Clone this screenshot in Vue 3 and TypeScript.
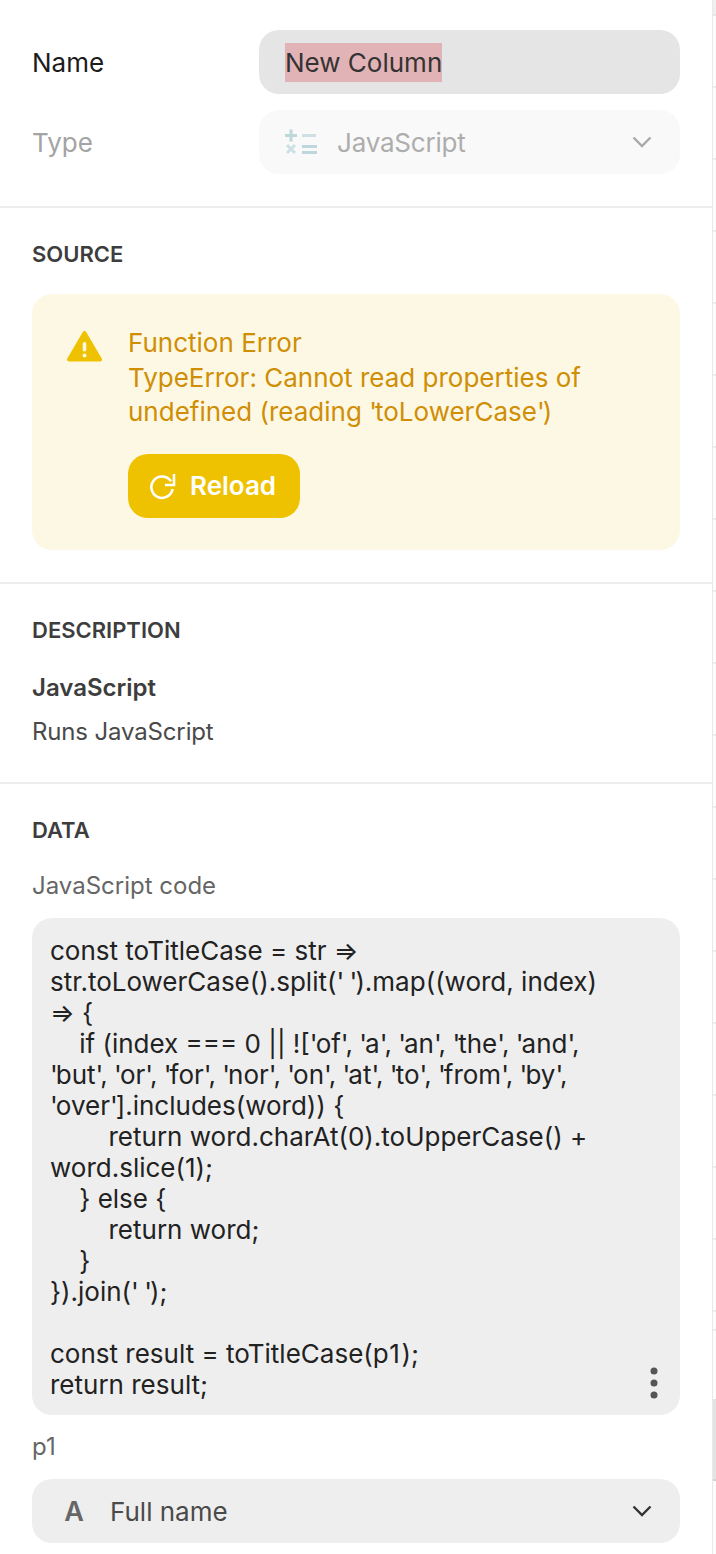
<script setup lang="ts">
interface Token { text: string; kind: string }

const code = `const toTitleCase = str => str.toLowerCase().split(' ').map((word, index) => {
    if (index === 0 || !['of', 'a', 'an', 'the', 'and', 'but', 'or', 'for', 'nor', 'on', 'at', 'to', 'from', 'by', 'over'].includes(word)) {
        return word.charAt(0).toUpperCase() + word.slice(1);
    } else {
        return word;
    }
}).join(' ');

const result = toTitleCase(p1);
return result;`

function tokenize(source: string): Token[] {
  return source
    .split(/(',|'|p1)/)
    .filter((text) => text.length > 0)
    .map((text) => ({
      text,
      kind: text === "'," ? 'quote-comma' : text === "'" ? 'quote' : text === 'p1' ? 'one' : 'plain',
    }))
}

const codeTokens = tokenize(code)
const errorTokens = tokenize("TypeError: Cannot read properties of undefined (reading 'toLowerCase')")
const stripCells = Array.from({ length: 18 }, (_, i) => i)
</script>

<template>
  <div class="page">
    <main class="panel">
      <section class="top">
        <div class="row">
          <label class="row-label">Name</label>
          <div class="input"><span class="selected">New Column</span></div>
        </div>
        <div class="row disabled">
          <label class="row-label">Type</label>
          <div class="select">
            <svg class="type-icon" width="32" height="28" viewBox="0 0 32 28">
              <path d="M0 7.500h12M6 1.500v12" stroke="#6fa9b6" stroke-width="3" fill="none" />
              <path d="M17 7.500h14" stroke="#8fc0ca" stroke-width="3" fill="none" />
              <path d="M2 17l8 8M10 17l-8 8" stroke="#8fc0ca" stroke-width="3" fill="none" />
              <path d="M17 18.500h15M17 24.500h15" stroke="#6fa9b6" stroke-width="3" fill="none" />
            </svg>
            <span class="select-text">JavaScript</span>
            <svg class="chev" width="20" height="12" viewBox="0 0 20 12"><path d="M1.500 1.500l8.500 8.500 8.500-8.500" fill="none" stroke="#333" stroke-width="2.400" /></svg>
          </div>
        </div>
      </section>

      <section class="section source">
        <h2>SOURCE</h2>
        <div class="alert">
          <svg class="warn" width="35" height="32" viewBox="0 0 35 32">
            <path d="M17.500 3 L33 29.500 H2 Z" fill="#eec200" stroke="#eec200" stroke-width="4" stroke-linejoin="round" />
            <rect x="15.700" y="12" width="3.600" height="9.500" rx="1.800" fill="#fdf8e4" />
            <circle cx="17.500" cy="25.500" r="2" fill="#fdf8e4" />
          </svg>
          <div class="alert-body">
            <div class="alert-text">Function Error<br /><span v-for="(t, i) in errorTokens" :key="i" :class="t.kind">{{ t.text }}</span></div>
            <button class="reload">
              <svg width="28" height="28" viewBox="0 0 28 28" fill="none" stroke="#fff" stroke-width="2.600">
                <path d="M22 9.300A10.700 10.700 0 1 0 23.600 17" />
                <path d="M25 2v11h-9" />
              </svg>
              Reload
            </button>
          </div>
        </div>
      </section>

      <section class="section desc">
        <h2>DESCRIPTION</h2>
        <div class="desc-title">JavaScript</div>
        <div class="desc-text">Runs JavaScript</div>
      </section>

      <section class="section data">
        <h2>DATA</h2>
        <div class="field-label first">JavaScript code</div>
        <div class="code-box">
          <pre class="code"><span v-for="(t, i) in codeTokens" :key="i" :class="t.kind">{{ t.text }}</span></pre>
          <svg class="dots" width="8" height="32" viewBox="0 0 8 32" fill="#555">
            <circle cx="4" cy="4" r="3.500" /><circle cx="4" cy="16" r="3.500" /><circle cx="4" cy="28" r="3.500" />
          </svg>
        </div>
        <div class="field-label second">p1</div>
        <div class="select dark">
          <span class="a-icon">A</span>
          <span class="select-text">Full name</span>
          <svg class="chev" width="20" height="12" viewBox="0 0 20 12"><path d="M1.500 1.500l8.500 8.500 8.500-8.500" fill="none" stroke="#333" stroke-width="2.400" /></svg>
        </div>
      </section>
    </main>
    <aside class="strip">
      <div class="strip-head"></div>
      <div v-for="c in stripCells" :key="c" class="strip-cell"></div>
      <div class="strip-short"></div>
      <div class="strip-gap"></div>
      <div class="strip-thumb"></div>
    </aside>
  </div>
</template>

<style>
html, body { margin: 0; background: #fff; }
</style>

<style scoped>
.page {
  display: flex;
  width: 716px;
  height: 1554px;
  overflow: hidden;
  font-family: Inter, "Noto Sans", sans-serif;
  color: #333;
  background: #fff;
}
.panel { width: 712px; flex: none; }
.strip { flex: 1; display: flex; flex-direction: column; border-left: 1px solid #e9e9e9; background: #fcfcfc; }
.strip-head { height: 14px; flex: none; background: #f0f0f0; border-bottom: 2px solid #e6e6e6; }
.strip-cell { height: 70px; flex: none; border-bottom: 2px solid #ececec; }
.strip-short { height: 17px; flex: none; border-bottom: 2px solid #ececec; }
.strip-gap { height: 68px; flex: none; }
.strip-thumb { height: 80px; flex: none; background: #e4e4e4; border-bottom: 2px solid #d4d4d4; }
.top { padding: 30px 32px 32px; border-bottom: 2px solid #ededed; display: flex; flex-direction: column; gap: 16px; }
.row { display: flex; align-items: center; }
.row-label { width: 227px; font-size: 26px; color: #1c1c1c; }
.disabled .row-label { color: #a4a4a4; }
.input {
  flex: 1;
  height: 64px;
  border-radius: 20px;
  background: #e5e5e5;
  display: flex;
  align-items: center;
  padding: 0 26px;
  font-size: 26px;
  box-sizing: border-box;
}
.selected { background: #e2b3b6; color: #333; line-height: 39px; }
.select {
  height: 64px;
  flex: 1;
  box-sizing: border-box;
  border-radius: 20px;
  display: flex;
  align-items: center;
  background: #f9f9f9;
  padding: 0 28px 0 26px;
  font-size: 26px;
}
.type-icon { opacity: 0.42; }
.select-text { flex: 1; margin-left: 20px; color: #adadad; letter-spacing: -0.2px; }
.disabled .chev { opacity: 0.4; }
.section { padding: 0 32px; border-bottom: 2px solid #ededed; }
h2 { margin: 0; font-size: 22px; line-height: 28px; font-weight: 600; color: #3d3d3d; }
.source { padding-top: 32px; padding-bottom: 32px; }
.alert {
  margin-top: 26px;
  height: 256px;
  box-sizing: border-box;
  background: #fdf8e4;
  border-radius: 20px;
  padding: 32px 32px 32px 35px;
  display: flex;
}
.warn { flex: none; margin-top: 4px; }
.alert-body { margin-left: 26px; }
.alert-text { font-size: 26px; line-height: 34.5px; color: #cf8e04; }
.quote { letter-spacing: -2px; }
.quote-comma { letter-spacing: -1px; }
.one { letter-spacing: 1.500px; }
.reload {
  margin-top: 24px;
  width: 172px;
  height: 64px;
  border: none;
  border-radius: 20px;
  background: #eec200;
  color: #fff;
  font: 600 26px Inter, sans-serif;
  display: flex;
  align-items: center;
  gap: 13px;
  padding: 0 0 0 21px;
  box-sizing: border-box;
}
.desc { padding-top: 32px; padding-bottom: 36px; height: 200px; box-sizing: border-box; }
.desc-title { margin-top: 28px; font-size: 24px; line-height: 32px; font-weight: 600; color: #3d3d3d; }
.desc-text { margin-top: 12px; font-size: 24px; line-height: 32px; color: #4a4a4a; letter-spacing: -0.15px; }
.data { padding-top: 32px; border-bottom: none; }
.field-label { font-size: 24px; line-height: 32px; color: #666; }
.field-label.first { margin-top: 26px; }
.field-label.second { margin-top: 16px; }
.code-box {
  position: relative;
  margin-top: 16px;
  background: #eee;
  border-radius: 20px;
  padding: 17px 56px 15px 18px;
  height: 497px;
  box-sizing: border-box;
}
.code {
  margin: 0;
  font-family: Inter, sans-serif;
  font-size: 26px;
  line-height: 31px;
  color: #222;
  white-space: pre-wrap;
  word-break: normal;
}
.dots { position: absolute; right: 22px; bottom: 16px; }
.dark { background: #eee; margin-top: 16px; }
.a-icon { width: 32px; font-weight: 600; font-size: 27px; color: #666; text-align: center; }
.dark .select-text { color: #4a4a4a; letter-spacing: 0; }
</style>
